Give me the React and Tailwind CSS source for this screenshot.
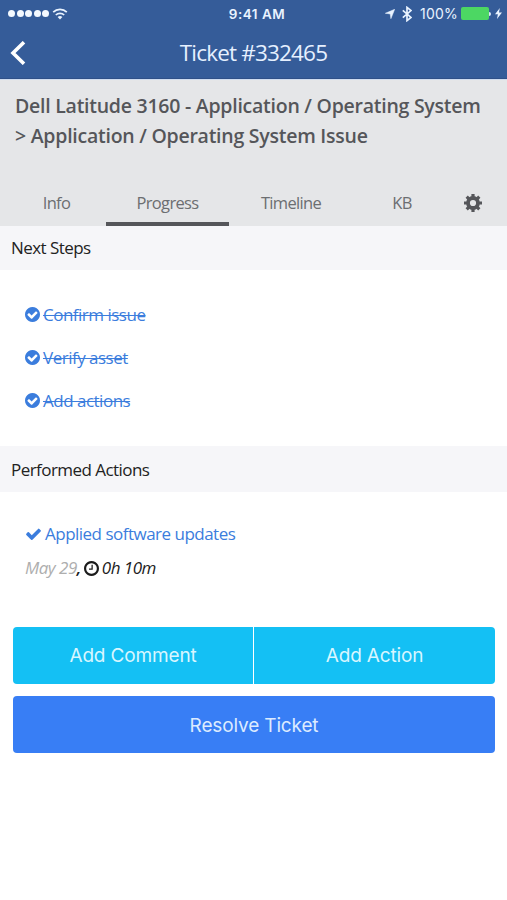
const steps = ['Confirm issue', 'Verify asset', 'Add actions']

const tabs = [
  { name: 'Info', className: 'w-[106px] pl-[7px]' },
  { name: 'Progress', className: 'w-[123px]' },
  { name: 'Timeline', className: 'w-[124px]' },
  { name: 'KB', className: 'w-[98px]' },
]

function WifiIcon() {
  return (
    <svg viewBox="0 0 16 12" className="w-4 h-3" fill="none" stroke="#e9f3ff" strokeWidth="1.7">
      <path d="M1.2 4.2a9.6 9.6 0 0 1 13.6 0" />
      <path d="M3.8 7a6 6 0 0 1 8.4 0" />
      <path d="M8 11.6 5.6 9.1a3.4 3.4 0 0 1 4.8 0Z" fill="#e9f3ff" stroke="none" />
    </svg>
  )
}

function BackIcon() {
  return (
    <svg viewBox="0 0 16 24" className="w-4 h-6" fill="none" stroke="white" strokeWidth="3.6">
      <path d="M14 1.2 3 12l11 10.8" />
    </svg>
  )
}

function LocationIcon() {
  return (
    <svg viewBox="0 0 10 10" className="w-[10px] h-[10px]" fill="#e9f3ff" stroke="#e9f3ff" strokeWidth=".5">
      <path d="M9.7.3 5.9 9.7 5.2 4.9.3 4.3Z" />
    </svg>
  )
}

function BluetoothIcon() {
  return (
    <svg viewBox="0 0 10 16" className="w-[10px] h-4" fill="none" stroke="#e9f3ff" strokeWidth="1.7">
      <path d="M.8 4.3 9 11.4 5 14.6V1.4l4 3.2-8.2 7.1" />
    </svg>
  )
}

function BoltIcon() {
  return (
    <svg viewBox="0 0 7 11" className="w-[7px] h-[11px]" fill="#e9f3ff">
      <path d="M4.8 0 0 6.2h2.9L2 11l5-6.4H4Z" />
    </svg>
  )
}

function GearIcon() {
  return (
    <svg viewBox="0 0 18 18" className="w-[18px] h-[18px]" fill="none" stroke="currentColor">
      <circle cx="9" cy="9" r="5" strokeWidth="3.8" />
      <path
        d="M9 0v3M9 15v3M0 9h3M15 9h3M2.7 2.7l2.1 2.1M13.2 13.2l2.1 2.1M2.7 15.3l2.1-2.1M13.2 4.8l2.1-2.1"
        strokeWidth="3.2"
      />
    </svg>
  )
}

function CheckCircleIcon() {
  return (
    <svg viewBox="128 128 1536 1536" className="w-[15px] h-[15px]" fill="currentColor">
      <path d="M1412 734q0-28-18-46l-91-90q-19-19-45-19t-45 19l-408 407-226-226q-19-19-45-19t-45 19l-91 90q-18 18-18 46 0 27 18 45l362 362q19 19 45 19 27 0 46-19l543-543q18-18 18-45zm252 162q0 209-103 385.5t-279.5 279.5-385.5 103-385.5-103-279.5-279.5-103-385.5 103-385.5 279.5-279.5 385.5-103 385.5 103 279.5 279.5 103 385.5z" />
    </svg>
  )
}

function CheckIcon() {
  return (
    <svg viewBox="121 270 1550 1252" className="w-[15px] h-3" fill="currentColor">
      <path d="M1671 566q0 40-28 68l-724 724-136 136q-28 28-68 28t-68-28l-136-136-362-362q-28-28-28-68t28-68l136-136q28-28 68-28t68 28l294 295 656-657q28-28 68-28t68 28l136 136q28 28 28 68z" />
    </svg>
  )
}

function ClockIcon() {
  return (
    <svg viewBox="128 128 1536 1536" className="w-[15px] h-[15px]" fill="currentColor">
      <path d="M1024 544v448q0 14-9 23t-23 9h-320q-14 0-23-9t-9-23v-64q0-14 9-23t23-9h224v-352q0-14 9-23t23-9h64q14 0 23 9t9 23zm416 352q0-148-73-273t-198-198-273-73-273 73-198 198-73 273 73 273 198 198 273 73 273-73 198-198 73-273zm224 0q0 209-103 385.5t-279.5 279.5-385.5 103-385.5-103-279.5-279.5-103-385.5 103-385.5 279.5-279.5 385.5-103 385.5 103 279.5 279.5 103 385.5z" />
    </svg>
  )
}

function StatusBar() {
  return (
    <div className="h-[27px] grid grid-cols-[1fr_auto_1fr] items-center pl-2 pr-[5px] text-[#e9f3ff] font-[Inter,sans-serif] text-[13px]">
      <div className="flex items-center">
        <div className="flex gap-[1.5px]">
          {[0, 1, 2, 3, 4].map(i => (
            <span key={i} className="w-[7px] h-[7px] rounded-full bg-[#f4f9ff]" />
          ))}
        </div>
        <span className="ml-[3px]"><WifiIcon /></span>
      </div>
      <span className="pt-px pl-[4px] text-[13.5px] font-semibold tracking-[0.5px]">9:41 AM</span>
      <div className="flex items-center justify-end">
        <LocationIcon />
        <span className="ml-[7px]"><BluetoothIcon /></span>
        <span className="ml-2 text-[14px] tracking-[0.2px]">100%</span>
        <span className="ml-[3px] w-7 h-[13px] rounded-[2px] bg-[#4cd763]" />
        <span className="w-[2px] h-1 rounded-r-full bg-[#dfeaf8]" />
        <span className="ml-1"><BoltIcon /></span>
      </div>
    </div>
  )
}

function SectionTitle({ className, children }) {
  return (
    <h3 className={`pl-[11px] bg-[#f6f6f9] text-[#222] text-[17px] leading-[26px] tracking-[-0.55px] ${className}`}>
      {children}
    </h3>
  )
}

export default function App() {
  return (
    <div className="h-[900px] w-[507px] overflow-hidden bg-white font-['Open_Sans',sans-serif]">
      <header className="h-[79px] bg-[#355c99] border-b border-[#2f5088]">
        <StatusBar />
        <div className="h-[51px] grid grid-cols-[1fr_auto_1fr] items-center pl-[10px] pr-[10px]">
          <button><BackIcon /></button>
          <h1 className="text-[22.5px] tracking-[-0.82px] text-[#e6f0ff]">Ticket #332465</h1>
        </div>
      </header>

      <section className="h-[147px] flex flex-col justify-between bg-[#e5e6e8] border-t border-[#cfdcf0] text-[#55565a]">
        <h2 className="pt-[11px] pl-[15px] text-[19.5px] leading-[29.5px] font-semibold tracking-[-0.25px] whitespace-nowrap">
          Dell Latitude 3160 - Application / Operating System<br />
          &gt; Application / Operating System Issue
        </h2>
        <nav className="flex h-[43px] text-[16.5px] tracking-[-0.68px] text-[#6c6e71]">
          {tabs.map(t => (
            <button
              key={t.name}
              className={`${t.className} border-b-4 pt-[2px] ${t.name === 'Progress' ? 'border-[#55565a]' : 'border-transparent'}`}
            >
              {t.name}
            </button>
          ))}
          <button className="w-11 pb-[3px] flex items-center justify-center text-[#55565a]"><GearIcon /></button>
        </nav>
      </section>

      <SectionTitle className="pt-[9px] pb-[9px]">Next Steps</SectionTitle>
      <ul className="h-[176px] pt-[23px] pl-[25px] text-[#3b7ddd]">
        {steps.map(step => (
          <li key={step} className="h-[43px] flex items-center gap-[3px]">
            <CheckCircleIcon />
            <span className="text-[17px] tracking-[-0.5px] line-through decoration-1">{step}</span>
          </li>
        ))}
      </ul>

      <SectionTitle className="pt-[11px] pb-[9px]">Performed Actions</SectionTitle>
      <div className="h-[135px] pt-[25px] pl-[25px] text-[17px] tracking-[-0.51px]">
        <div className="h-[34px] flex items-center gap-1 pl-px text-[#3b7ddd]">
          <CheckIcon />
          <span>Applied software updates</span>
        </div>
        <div className="h-[34px] flex items-center italic text-[#1c1c1c]">
          <span className="text-[#aeaeae]">May 29</span>
          <span className="mr-[3px] font-semibold">,</span>
          <ClockIcon />
          <span className="ml-[3px]">0h 10m</span>
        </div>
      </div>

      <div className="flex flex-col gap-3 pl-[13px] pr-3 font-[Inter,sans-serif] text-[19px] tracking-[-0.15px] text-[#d8f6ff]">
        <div className="h-[57px] flex gap-px rounded overflow-hidden">
          <button className="w-[240px] pt-[2px] bg-[#14c0f4]">Add Comment</button>
          <button className="flex-1 pt-[2px] bg-[#14c0f4]">Add Action</button>
        </div>
        <button className="h-[57px] pt-[3px] rounded bg-[#387ef5] text-[#dcebff]">Resolve Ticket</button>
      </div>
    </div>
  )
}
